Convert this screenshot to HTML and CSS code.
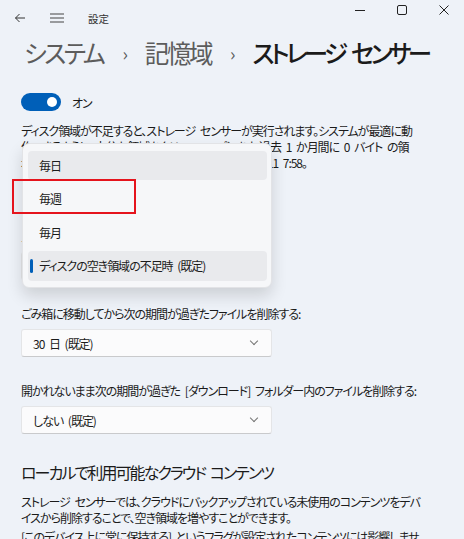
FILE: index.html
```html
<!DOCTYPE html>
<html lang="ja">
<head>
<meta charset="UTF-8" />
<meta name="viewport" content="width=device-width, initial-scale=1" />
<title>設定</title>
<link rel="stylesheet" href="styles.css">
</head>
<body>
<div class="titlebar">
  <span class="tb-icon back">
    <svg width="12" height="10" viewBox="0 0 12 10"><path d="M11 5H1.5M5.5 1L1.5 5l4 4" fill="none" stroke="#333" stroke-width="1"/></svg>
  </span>
  <span class="tb-icon menu">
    <svg width="14" height="10" viewBox="0 0 14 10"><path d="M0 1h14M0 5h14M0 9h14" fill="none" stroke="#444" stroke-width="1.2"/></svg>
  </span>
  <span class="app-title">設定</span>
  <div class="win-ctrls">
    <span class="wc"><svg width="10" height="10" viewBox="0 0 10 10"><path d="M0 5.5h10" stroke="#222" stroke-width="1"/></svg></span>
    <span class="wc"><svg width="10" height="10" viewBox="0 0 10 10"><rect x="0.5" y="0.5" width="9" height="9" rx="1.5" fill="none" stroke="#222" stroke-width="1"/></svg></span>
    <span class="wc"><svg width="10" height="10" viewBox="0 0 10 10"><path d="M0.5 0.5l9 9M9.5 0.5l-9 9" stroke="#222" stroke-width="1"/></svg></span>
  </div>
</div>

<main class="content">
  <h1 class="crumbs">
    <span class="crumb">システム</span>
    <span class="sep">›</span>
    <span class="crumb">記憶域</span>
    <span class="sep">›</span>
    <span class="crumb current">ストレージ センサー</span>
  </h1>

  <div class="toggle-row">
    <span class="toggle"><span class="knob"></span></span>
    <span class="toggle-text">オン</span>
  </div>

  <p class="desc">ディスク領域が不足すると、ストレージ センサーが実行されます。システムが最適に動作できるように、十分な領域をクリーンアップします。過去 1 か月間に 0 バイト の領域を解放しました。最終クリーンアップ日時: 2021/11/11 7:58。</p>

  <div class="field run">
    <label class="field-label">ストレージ センサーを実行する:</label>
    <div class="select">ディスクの空き領域の不足時 (既定)<span class="chev"></span></div>

    <ul class="popup">
      <li class="item hover">毎日</li>
      <li class="item">毎週</li>
      <li class="item">毎月</li>
      <li class="item selected">ディスクの空き領域の不足時 (既定)</li>
      <li class="mark"></li>
    </ul>
  </div>

  <div class="field">
    <label class="field-label">ごみ箱に移動してから次の期間が過ぎたファイルを削除する:</label>
    <div class="select">30 日 (既定)<span class="chev"></span></div>
  </div>

  <div class="field">
    <label class="field-label">開かれないまま次の期間が過ぎた [ダウンロード] フォルダー内のファイルを削除する:</label>
    <div class="select">しない (既定)<span class="chev"></span></div>
  </div>

  <h2 class="sub">ローカルで利用可能なクラウド コンテンツ</h2>
  <p class="text">ストレージ センサーでは、クラウドにバックアップされている未使用のコンテンツをデバイスから削除することで、空き領域を増やすことができます。</p>
  <p class="text">[このデバイス上に常に保持する] というフラグが設定されたコンテンツには影響しません。</p>
</main>
</body>
</html>
```

FILE: styles.css
```css
html, body {
  margin: 0; padding: 0;
  height: 100%;
  overflow: hidden;
}
body {
  font-family: "Noto Sans CJK JP", "Noto Sans", sans-serif;
  font-feature-settings: "palt";
  background: #eef2f8;
  color: #1b1b1b;
  font-size: 12px;
  letter-spacing: -0.085em;
  word-spacing: 0.25em;
}

/* title bar */
.titlebar {
  height: 36px;
  display: flex;
  align-items: center;
  position: relative;
}
.tb-icon {
  display: flex;
  align-items: center;
}
.back { margin-left: 14px; }
.menu { margin-left: 24px; }
.app-title {
  margin-left: 24px;
  font-size: 10.5px;
  color: #333;
  letter-spacing: 0;
}
.win-ctrls {
  position: absolute;
  top: 5px;
  right: 15px;
  display: flex;
  gap: 32px;
}
.wc { display: flex; width: 10px; height: 10px; }

/* content */
.content {
  padding: 0 38px 0 21px;
}
.crumbs {
  margin: 0 0 0 3px;
  font-weight: normal;
  font-size: 24.5px;
  line-height: 34px;
  display: flex;
  align-items: center;
  white-space: nowrap;
  letter-spacing: -0.1em;
  word-spacing: 0.2em;
}
.crumb { color: #5c5c5c; }
.crumb.current {
  color: #1b1b1b;
  font-weight: 500;
  letter-spacing: -0.15em;
}
.sep {
  font-size: 18px;
  color: #5c5c5c;
  letter-spacing: 0;
  margin: 0 17px 0 19px;
}

.toggle-row {
  display: flex;
  align-items: center;
  margin-top: 23px;
  height: 18px;
}
.toggle {
  width: 40px;
  height: 18px;
  border-radius: 9px;
  background: #005fb8;
  position: relative;
}
.knob {
  position: absolute;
  right: 4px;
  top: 4px;
  width: 10px;
  height: 10px;
  border-radius: 50%;
  background: #fff;
}
.toggle-text {
  margin-left: 11px;
}

.desc {
  margin: 12px 0 0;
  max-width: 396px;
  line-height: 16px;
}

.field {
  margin-top: 58px;
  position: relative;
}
.field + .field { margin-top: 26px; }
.field-label {
  display: block;
  line-height: 16px;
}
.select {
  margin-top: 7px;
  width: 251px;
  height: 28px;
  box-sizing: border-box;
  padding: 0 11px;
  display: flex;
  align-items: center;
  justify-content: space-between;
  background: #fbfbfc;
  border: 1px solid #e4e5e7;
  border-bottom-color: #c9cacc;
  border-radius: 3px;
}
.chev {
  width: 5px;
  height: 5px;
  border-right: 1px solid #777;
  border-bottom: 1px solid #777;
  transform: rotate(45deg);
  margin-right: 3px;
  margin-top: -4px;
}

/* open dropdown */
.popup {
  position: absolute;
  left: 1px;
  top: -86.5px;
  width: 250px;
  margin: 0;
  padding: 7px 4px 6px 5px;
  box-sizing: border-box;
  list-style: none;
  background: #f6f7f9;
  border: 1px solid #e2e3e6;
  border-radius: 7px;
  box-shadow: 0 8px 16px rgba(0, 0, 0, 0.14);
  display: flex;
  flex-direction: column;
  gap: 4px;
}
.item {
  height: 29.5px;
  display: flex;
  align-items: center;
  padding-left: 11px;
  border-radius: 4px;
  position: relative;
}
.item.hover, .item.selected { background: #e9eaed; }
.item.selected::before {
  content: "";
  position: absolute;
  left: 2px;
  top: 8px;
  width: 3px;
  height: 14px;
  border-radius: 2px;
  background: #005fb8;
}
.mark {
  position: absolute;
  left: -11px;
  top: 35px;
  width: 124px;
  height: 35px;
  box-sizing: border-box;
  border: 2.5px solid #e5141d;
}

.sub {
  margin: 26px 0 0;
  font-size: 16px;
  font-weight: normal;
  line-height: 24px;
  letter-spacing: -0.12em;
}
.text {
  margin: 10px 0 0;
  line-height: 16px;
}
.text + .text { margin-top: 3px; }
```
